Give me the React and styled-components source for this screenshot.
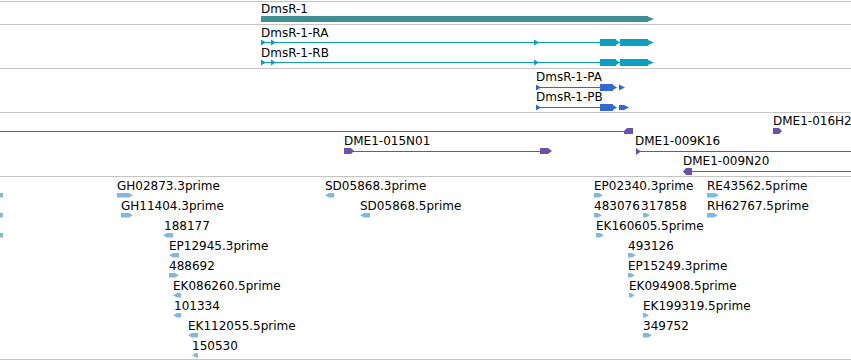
import React from 'react';
import styled, { createGlobalStyle } from 'styled-components';

const GlobalStyle = createGlobalStyle`
  html, body { margin: 0; padding: 0; background: #ffffff; }
  body { font-family: "DejaVu Sans", "Liberation Sans", sans-serif; overflow: hidden; }
`;

const Browser = styled.div`
  width: 851px;
  height: 360px;
  overflow: hidden;
  padding-top: 1px;
  box-sizing: border-box;
  display: flex;
  flex-direction: column;
  background: #ffffff;
`;

const TrackBox = styled.div`
  position: relative;
  flex: none;
  height: ${(p) => p.$h}px;
  border-top: 1px solid #c4c4c4;
  border-bottom: ${(p) => (p.$last ? '1px solid #c4c4c4' : 'none')};
  overflow: hidden;
`;

const Canvas = styled.svg`
  position: absolute;
  left: 0;
  top: 0;
  width: 851px;
  height: 100%;
  overflow: visible;
`;

const FeatureLabel = styled.span`
  position: absolute;
  left: ${(p) => p.$x}px;
  top: ${(p) => p.$y}px;
  font-size: 12px;
  line-height: 14px;
  color: #000000;
  white-space: nowrap;
`;

const COLORS = {
  gene: '#408f92',
  mrna: '#0c9fc2',
  cds: '#3568cf',
  bac: '#6a52a6',
  est: '#82b7de',
};

/* Track component: data in page coordinates, shifted into track space */
function Track({ top, h, last, labels, children }) {
  return (
    <TrackBox $h={h} $last={last}>
      <Canvas>
        <g transform={`translate(0,${-top})`}>{children}</g>
      </Canvas>
      {labels.map((l, i) => (
        <FeatureLabel key={i} $x={l.x} $y={l.base - 11 - top}>
          {l.text}
        </FeatureLabel>
      ))}
    </TrackBox>
  );
}

const tri = (x, cy, w, hh, color) => (
  <polygon points={`${x},${cy - hh} ${x + w},${cy} ${x},${cy + hh}`} fill={color} />
);

/* ---------- track 1: gene ---------- */
function GeneTrack() {
  return (
    <Track top={2} h={22} labels={[{ x: 261, base: 13, text: 'DmsR-1' }]}>
      <rect x={261} y={16} width={387} height={6} fill={COLORS.gene} />
      <polygon points="648,16.5 654,19 648,21.5" fill={COLORS.gene} />
    </Track>
  );
}

/* ---------- track 2: transcripts ---------- */
function Transcript({ y }) {
  const c = COLORS.mrna;
  const cy = y + 0.5;
  return (
    <g>
      <rect x={261} y={y} width={360} height={1} fill={c} />
      {tri(261, cy, 5, 3, c)}
      {tri(271, cy, 5, 3, c)}
      {tri(534, cy, 5, 3, c)}
      <rect x={600} y={y - 3} width={16} height={7} fill={c} />
      <polygon points={`616,${cy - 2.5} 620,${cy} 616,${cy + 2.5}`} fill={c} />
      <rect x={620} y={y - 3} width={28} height={7} fill={c} />
      <polygon points={`648,${cy - 2.5} 654,${cy} 648,${cy + 2.5}`} fill={c} />
    </g>
  );
}

function TranscriptTrack() {
  return (
    <Track
      top={25}
      h={43}
      labels={[
        { x: 261, base: 37, text: 'DmsR-1-RA' },
        { x: 261, base: 57, text: 'DmsR-1-RB' },
      ]}
    >
      <Transcript y={42} />
      <Transcript y={62} />
    </Track>
  );
}

/* ---------- track 3: CDS ---------- */
function Protein({ y, long }) {
  const c = COLORS.cds;
  const cy = y + 0.5;
  return (
    <g>
      <rect x={536} y={y} width={64} height={1} fill={c} />
      {tri(536, cy, 5, 3, c)}
      <rect x={600} y={y - 3} width={13} height={7} fill={c} />
      <polygon points={`613,${cy - 2.5} 617,${cy} 613,${cy + 2.5}`} fill={c} />
      {long ? (
        <>
          <rect x={619} y={y - 2} width={5} height={5} fill={c} />
          <polygon points={`624,${cy - 2.5} 629,${cy} 624,${cy + 2.5}`} fill={c} />
        </>
      ) : (
        <polygon points={`619,${cy - 3} 625,${cy} 619,${cy + 3}`} fill={c} />
      )}
    </g>
  );
}

function ProteinTrack() {
  return (
    <Track
      top={69}
      h={43}
      labels={[
        { x: 536, base: 81, text: 'DmsR-1-PA' },
        { x: 536, base: 101, text: 'DmsR-1-PB' },
      ]}
    >
      <Protein y={87} />
      <Protein y={107} long />
    </Track>
  );
}

/* ---------- track 4: BAC clones ---------- */
function BacTrack() {
  const c = COLORS.bac;
  return (
    <Track
      top={113}
      h={63}
      labels={[
        { x: 773, base: 125, text: 'DME1-016H20' },
        { x: 344, base: 145, text: 'DME1-015N01' },
        { x: 635, base: 145, text: 'DME1-009K16' },
        { x: 683, base: 165, text: 'DME1-009N20' },
      ]}
    >
      {/* long clone ending at 633 */}
      <rect x={0} y={131} width={625} height={1} fill={c} />
      <polygon points="624,131 627,128 633,128 633,134 624,134" fill={c} />
      {/* DME1-016H20 */}
      <polygon points="773,128 779,128 782,131 779,134 773,134" fill={c} />
      {/* DME1-015N01 */}
      <rect x={344} y={151} width={200} height={1} fill={c} />
      <polygon points="344,148 351,148 354,151 351,154 344,154" fill={c} />
      <polygon points="540,148 548,148 552,151 548,154 540,154" fill={c} />
      {/* DME1-009K16 */}
      <rect x={636} y={151} width={215} height={1} fill={c} />
      <polygon points="636,148 641,151.5 636,155" fill={c} />
      {/* DME1-009N20 */}
      <rect x={686} y={171} width={165} height={1} fill={c} />
      <polygon points="683,171.5 686,168 692,168 692,175 686,175" fill={c} />
    </Track>
  );
}

/* ---------- track 5: ESTs ---------- */
const ESTS = [
  { row: 0, x0: -4, x1: 3, dir: 'L' },
  { row: 1, x0: -4, x1: 3, dir: 'L' },
  { row: 2, x0: -4, x1: 3, dir: 'L' },
  { row: 0, x0: 117, x1: 133, dir: 'R', label: 'GH02873.3prime' },
  { row: 0, x0: 325, x1: 334, dir: 'L', label: 'SD05868.3prime' },
  { row: 0, x0: 594, x1: 603, dir: 'R', label: 'EP02340.3prime' },
  { row: 0, x0: 707, x1: 719, dir: 'R', label: 'RE43562.5prime' },
  { row: 1, x0: 121, x1: 133, dir: 'R', label: 'GH11404.3prime' },
  { row: 1, x0: 360, x1: 370, dir: 'L', label: 'SD05868.5prime' },
  { row: 1, x0: 594, x1: 602, dir: 'R', label: '483076' },
  { row: 1, x0: 643, x1: 650, dir: 'R', label: '317858', lx: 641 },
  { row: 1, x0: 707, x1: 718, dir: 'R', label: 'RH62767.5prime' },
  { row: 2, x0: 163, x1: 173, dir: 'L', label: '188177', lx: 164 },
  { row: 2, x0: 596, x1: 604, dir: 'R', label: 'EK160605.5prime' },
  { row: 3, x0: 169, x1: 179, dir: 'L', label: 'EP12945.3prime' },
  { row: 3, x0: 628, x1: 636, dir: 'R', label: '493126' },
  { row: 4, x0: 169, x1: 179, dir: 'R', label: '488692' },
  { row: 4, x0: 628, x1: 635, dir: 'R', label: 'EP15249.3prime' },
  { row: 5, x0: 173, x1: 181, dir: 'L', label: 'EK086260.5prime' },
  { row: 5, x0: 629, x1: 635, dir: 'R', label: 'EK094908.5prime' },
  { row: 6, x0: 173, x1: 181, dir: 'L', label: '101334', lx: 174 },
  { row: 6, x0: 643, x1: 649, dir: 'R', label: 'EK199319.5prime' },
  { row: 7, x0: 188, x1: 198, dir: 'L', label: 'EK112055.5prime' },
  { row: 7, x0: 643, x1: 652, dir: 'R', label: '349752' },
  { row: 8, x0: 192, x1: 198, dir: 'L', label: '150530' },
];

function EstGlyph({ x0, x1, dir, row }) {
  const t = 193 + row * 20;
  const b = t + 4.5;
  const m = (t + b) / 2;
  const pts =
    dir === 'R'
      ? `${x0},${t} ${x1 - 4},${t} ${x1},${m} ${x1 - 4},${b} ${x0},${b}`
      : `${x0},${m} ${x0 + 4},${t} ${x1},${t} ${x1},${b} ${x0 + 4},${b}`;
  return <polygon points={pts} fill={COLORS.est} />;
}

function EstTrack() {
  const labels = ESTS.filter((e) => e.label).map((e) => ({
    x: e.lx ?? e.x0,
    base: 190 + e.row * 20,
    text: e.label,
  }));
  return (
    <Track top={177} h={182} last labels={labels}>
      {ESTS.map((e, i) => (
        <EstGlyph key={i} {...e} />
      ))}
    </Track>
  );
}

export default function App() {
  return (
    <>
      <GlobalStyle />
      <Browser>
        <GeneTrack />
        <TranscriptTrack />
        <ProteinTrack />
        <BacTrack />
        <EstTrack />
      </Browser>
    </>
  );
}
